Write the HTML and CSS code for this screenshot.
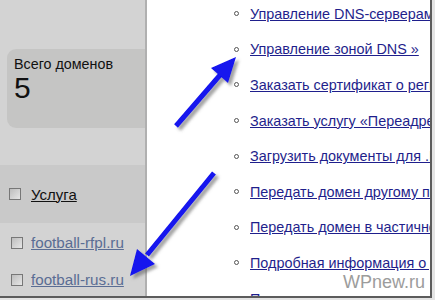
FILE: index.html
```html
<!DOCTYPE html>
<html lang="ru">
<head>
    <meta charset="UTF-8">
    <meta name="viewport" content="width=device-width, initial-scale=1.0">
    <title>Домены</title>
    <link rel="stylesheet" href="styles.css">
</head>
<body>
    <div class="frame">
        <div class="sidebar">
            <div class="total">
                <div class="total-label">Всего доменов</div>
                <div class="total-value">5</div>
            </div>
            <div class="table-head">
                <span class="check"></span>
                <a href="#" class="head-link">Услуга</a>
            </div>
            <div class="domain-row">
                <span class="check"></span>
                <a href="#" class="domain-link">football-rfpl.ru</a>
            </div>
            <div class="domain-row">
                <span class="check"></span>
                <a href="#" class="domain-link">football-rus.ru</a>
            </div>
        </div>
        <div class="popup">
            <ul class="actions">
                <li><a href="#">Управление DNS-серверами »</a></li>
                <li><a href="#">Управление зоной DNS »</a></li>
                <li><a href="#">Заказать сертификат о регистрации домена »</a></li>
                <li><a href="#">Заказать услугу «Переадресация» »</a></li>
                <li><a href="#">Загрузить документы для .RU »</a></li>
                <li><a href="#">Передать домен другому пользователю »</a></li>
                <li><a href="#">Передать домен в частичное управление »</a></li>
                <li><a href="#">Подробная информация о домене »</a></li>
                <li><a href="#">Продлить регистрацию домена »</a></li>
            </ul>
        </div>
        <svg class="arrows" width="431" height="297" viewBox="0 0 431 297">
            <defs>
                <filter id="shadow" x="-20%" y="-20%" width="140%" height="140%">
                    <feDropShadow dx="3" dy="3" stdDeviation="1.5" flood-color="#666" flood-opacity="0.6"/>
                </filter>
            </defs>
            <g filter="url(#shadow)" fill="#1212ee" stroke="#1212ee">
                <line x1="176" y1="126" x2="221" y2="74" stroke-width="5"/>
                <polygon points="236,57 228,83 211,68" stroke="none"/>
                <line x1="214" y1="173" x2="147" y2="255" stroke-width="5"/>
                <polygon points="130,276 137,249 155,264" stroke="none"/>
            </g>
        </svg>
        <div class="watermark">WPnew.ru</div>
    </div>
</body>
</html>
```

FILE: styles.css
```css
body {
    margin: 0;
    background-color: #e4e4e4;
    font-family: Arial, "Liberation Sans", sans-serif;
}
.frame {
    position: relative;
    display: flex;
    width: 430px;
    height: 296px;
    border-right: 2px solid #5c5c5c;
    border-bottom: 2px solid #5c5c5c;
    overflow: hidden;
}
.sidebar {
    width: 145px;
    flex-shrink: 0;
    background-color: #d3d3d3;
    padding-top: 49px;
}
.total {
    margin-left: 7px;
    height: 79px;
    background-color: #c5c5c4;
    border-radius: 9px 0 0 9px;
    padding: 7px 0 0 7px;
    box-sizing: border-box;
}
.total-label {
    font-size: 14.3px;
    color: #111;
}
.total-value {
    font-size: 30px;
    line-height: 32px;
    color: #111;
}
.table-head {
    display: flex;
    align-items: center;
    gap: 10px;
    margin-top: 37px;
    height: 58px;
    padding-left: 9px;
    background-color: #c9c9c9;
}
.head-link {
    font-size: 15px;
    color: #111;
}
.domain-row {
    display: flex;
    align-items: center;
    gap: 8px;
    height: 37px;
    padding-left: 11px;
}
.table-head + .domain-row {
    margin-top: 1px;
}
.domain-link {
    font-size: 15.2px;
    color: #5a6d94;
}
.check {
    width: 10px;
    height: 10px;
    border: 1px solid #777;
    background: linear-gradient(135deg, #bdbdbd, #e6e6e6);
}
.popup {
    flex: 1;
    background-color: #fff;
    border-left: 2px solid #b0b0b0;
    overflow: hidden;
}
.actions {
    list-style: none;
    margin: -4px 0 0 0;
    padding: 0 0 0 87px;
}
.actions li {
    display: flex;
    align-items: center;
    height: 35.6px;
    white-space: nowrap;
    font-size: 14.4px;
}
.actions li::before {
    content: "";
    width: 3px;
    height: 3px;
    border: 1px solid #555;
    border-radius: 50%;
    margin-right: 11px;
    flex-shrink: 0;
}
.actions a {
    color: #1f1f8c;
}
.arrows {
    position: absolute;
    top: 0;
    left: 0;
    pointer-events: none;
}
.watermark {
    position: absolute;
    right: 5px;
    bottom: 3px;
    font-size: 18px;
    color: #9c9c9c;
}
```
